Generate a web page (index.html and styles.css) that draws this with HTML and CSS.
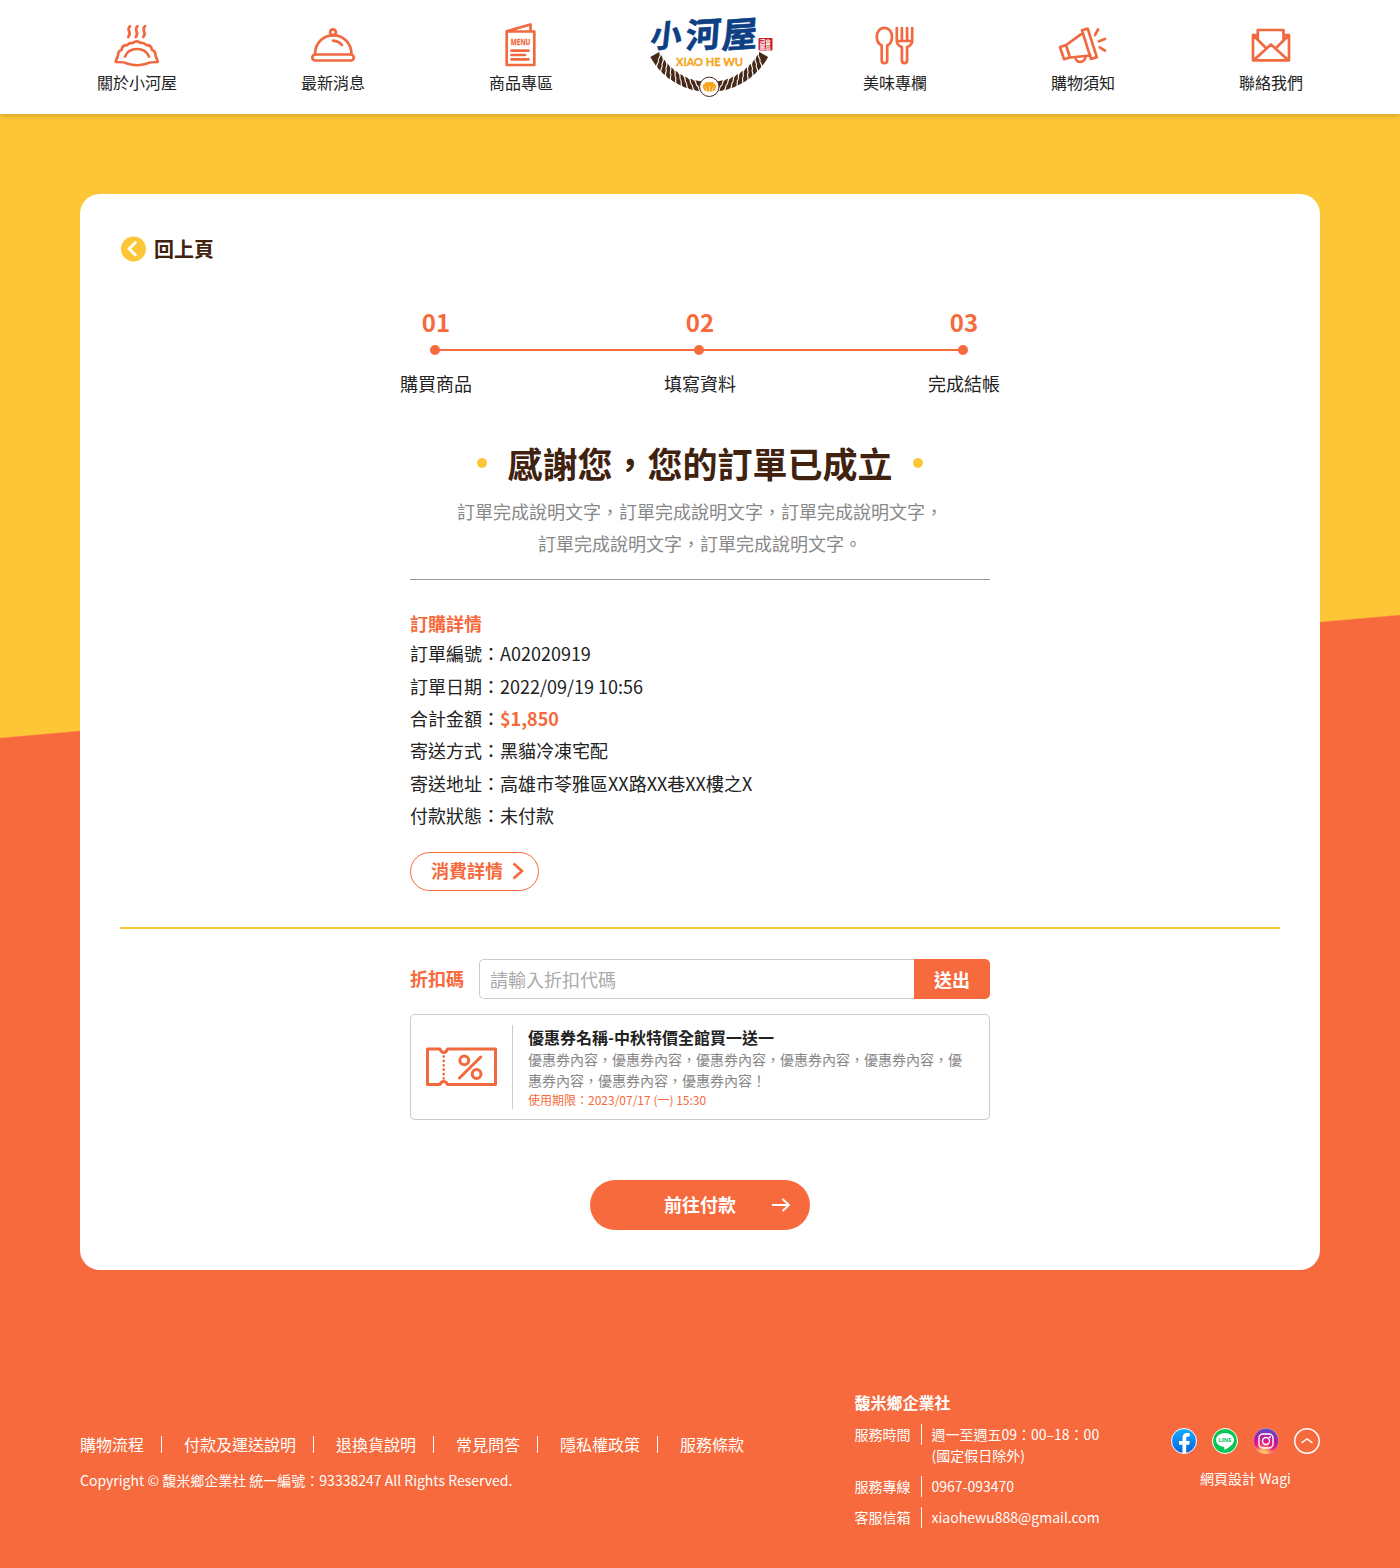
FILE: index.html
```html
<!DOCTYPE html>
<html lang="zh-Hant">
<head>
<meta charset="utf-8">
<title>小河屋</title>
<link rel="stylesheet" href="styles.css">
</head>
<body>
<header class="header">
  <nav class="nav">
    <a class="nav-item">
      <svg class="nav-icon" viewBox="0 0 50 50">
        <path d="M3.8 42C4 39.500 5.500 37.500 6 35.500C6 32.500 7.500 30.500 9.500 30C10 27 12 25 15 25.200C17 22.500 19.500 23 21 22.800C23.500 21 26 21 28.500 22.800C31 22.500 33 23.500 34.500 25.200C37.500 25 39.500 27 40 30C42 30.500 43.500 32.500 43.500 35.500C44 37.500 45.500 39.500 45.800 42C42 42 38 41.800 35 43.500C29 45.600 21 45.600 15 43.500C12 41.800 8 42 3.800 42ZM13 36.500C17 26.500 33 26.500 37 36.500"/>
        <path d="M18 6.200C13.500 9.800 20.500 12.700 16.300 17M25.500 6.200C21 9.800 28 12.700 23.800 17M33 6.200C28.500 9.800 35.500 12.700 31.300 17"/>
      </svg>
      <span>關於小河屋</span>
    </a>
    <a class="nav-item">
      <svg class="nav-icon" viewBox="0 0 50 50">
        <rect x="4.300" y="34.500" width="41.500" height="6" rx="3"/>
        <path d="M7 34.500C7 9 43.500 9 43.500 34.500M25 20.700C29 21 32 22.500 34 25"/>
        <circle cx="25" cy="12.300" r="2.900"/>
      </svg>
      <span>最新消息</span>
    </a>
    <a class="nav-item">
      <svg class="nav-icon" viewBox="0 0 50 50">
        <path d="M10.700 11.500H38.300V45H10.700ZM10.700 11.200L34.500 4.500V11M15.500 30.700H32.500M15.500 35H29M15.500 39.300H32.500"/>
        <text class="menu-word" x="24.600" y="24.500" textLength="19.500" lengthAdjust="spacingAndGlyphs">MENU</text>
      </svg>
      <span>商品專區</span>
    </a>
    <a class="logo">
      <svg viewBox="0 0 145 100" width="145" height="100">
        <defs>
          <path id="groove" d="M-5.500-5.500C-1.500-5.500-2 0 0 0S1.500 5.500 5.500 5.500"/>
          <g id="rope">
            <path d="M0 62A62 62 0 0 1-54.500 29.500" fill="none" stroke="#47291a" stroke-width="10"/>
            <g fill="none" stroke="#fff" stroke-width="1.100">
              <use href="#groove" transform="rotate(11) translate(0 62)"/>
              <use href="#groove" transform="rotate(16.500) translate(0 62)"/>
              <use href="#groove" transform="rotate(22) translate(0 62)"/>
              <use href="#groove" transform="rotate(27.500) translate(0 62)"/>
              <use href="#groove" transform="rotate(33) translate(0 62)"/>
              <use href="#groove" transform="rotate(38.500) translate(0 62)"/>
              <use href="#groove" transform="rotate(44) translate(0 62)"/>
              <use href="#groove" transform="rotate(49.500) translate(0 62)"/>
              <use href="#groove" transform="rotate(55) translate(0 62)"/>
            </g>
          </g>
        </defs>
        <use href="#rope" transform="translate(69.200 17)"/>
        <use href="#rope" transform="translate(69.200 17) scale(-1 1)"/>
        <g class="brush">
          <text transform="translate(9.500 40) skewX(-10) rotate(-4)" font-size="31">小</text>
          <text transform="translate(45 40.500) skewX(-8) rotate(-4)" font-size="35">河</text>
          <text transform="translate(81 40.500) skewX(-8) rotate(-4)" font-size="35.500">屋</text>
        </g>
        <rect x="118.500" y="30" width="14" height="12.500" rx="1" fill="#c9202c"/>
        <text class="seal" x="119.700" y="35.700">河食</text>
        <text class="seal" x="119.700" y="41.200">屋品</text>
        <text class="latin" x="69.500" y="57.500" textLength="67" lengthAdjust="spacingAndGlyphs">XIAO HE WU</text>
        <circle cx="69.300" cy="78.800" r="9.700" fill="#fff" stroke="#47291a" stroke-width="1"/>
        <path d="M63.500 80.500a3 3 0 0 1 1-4.800a2.800 2.800 0 0 1 3.500-1.500a3 3 0 0 1 3 0a2.800 2.800 0 0 1 3.500 1.500a3 3 0 0 1 1 4.800c-.5 2.500-2.500 3-6 3s-5.500-.5-6-3z" fill="#f6a41c"/>
        <path d="M66.500 83v-2.500l-2-1.500M69.500 83.500V78M72.500 83v-2.500l2-1.500" fill="none" stroke="#fff" stroke-width=".5"/>
      </svg>
    </a>
    <a class="nav-item">
      <svg class="nav-icon" viewBox="0 0 50 50">
        <path d="M11.700 25.500C8.500 24 6.800 20.500 6.800 17C6.800 11.500 10 7.800 14.400 7.800S22 11.500 22 17C22 20.500 20.500 24 17.200 25.500V40.500A2.750 2.750 0 0 1 11.700 40.500Z"/>
        <path d="M26.800 8V21C26.800 24 29 26 31.900 27V40.500A2.600 2.600 0 0 0 37.100 40.500V27C40 26 42.200 24 42.200 21V8M31.900 8V20.500M37.100 8V20.500M26.800 21H42.200"/>
      </svg>
      <span>美味專欄</span>
    </a>
    <a class="nav-item">
      <svg class="nav-icon" viewBox="0 0 50 50">
        <path d="M24 10.300L29.700 8.600L38.800 37.200L33 38.900ZM24.800 12.800L8.300 25M32.500 35.500L12 37.500M2 27L8 25L12 37.500L6 39.200ZM17.500 37.500C18 43.500 27 43.500 27.500 36.500M37 15L40 9.500M41 21.300L47 18.900M41.700 27.300L47 30.600"/>
      </svg>
      <span>購物須知</span>
    </a>
    <a class="nav-item">
      <svg class="nav-icon" viewBox="0 0 50 50">
        <path d="M11.800 15H7V40.300H43V15H37.500M11.800 19.500V10H37.500V19.500M7 15L20.500 28.500M43 15L29.500 28.500M8 40L25 24.500L42 40"/>
      </svg>
      <span>聯絡我們</span>
    </a>
  </nav>
</header>

<main class="card">
  <a class="back">
    <svg width="26" height="26" viewBox="0 0 26 26"><circle cx="12.500" cy="13" r="12.500" fill="#fdc636"/><path d="M15.200 5.800L8.200 12.800L15.200 19.800" fill="none" stroke="#fff" stroke-width="2.800"/></svg>
    <span>回上頁</span>
  </a>

  <ol class="steps">
    <li class="step"><b class="step-no">01</b><i class="step-dot"></i><span>購買商品</span></li>
    <li class="step"><b class="step-no">02</b><i class="step-dot"></i><span>填寫資料</span></li>
    <li class="step"><b class="step-no">03</b><i class="step-dot"></i><span>完成結帳</span></li>
  </ol>

  <section class="order">
    <h1 class="title">感謝您，您的訂單已成立</h1>
    <p class="intro">訂單完成說明文字，訂單完成說明文字，訂單完成說明文字，<br>訂單完成說明文字，訂單完成說明文字。</p>
    <h2 class="subtitle">訂購詳情</h2>
    <ul class="details">
      <li>訂單編號：A02020919</li>
      <li>訂單日期：2022/09/19 10:56</li>
      <li>合計金額：<b class="price">$1,850</b></li>
      <li>寄送方式：黑貓冷凍宅配</li>
      <li>寄送地址：高雄市苓雅區XX路XX巷XX樓之X</li>
      <li>付款狀態：未付款</li>
    </ul>
    <a class="detail-btn">消費詳情
      <svg width="12" height="18" viewBox="0 0 12 18"><path d="M1.500 1.500L10 9L1.500 16.500" fill="none" stroke="currentColor" stroke-width="2.800"/></svg>
    </a>
  </section>

  <section class="discount">
    <form class="code">
      <label class="code-label">折扣碼</label>
      <input class="code-input" type="text" placeholder="請輸入折扣代碼">
      <button class="code-btn" type="button">送出</button>
    </form>
    <article class="coupon">
      <div class="coupon-icon">
        <svg width="71" height="40" viewBox="0 0 71 40" fill="none" stroke="#f0693f" stroke-width="3" stroke-linejoin="round">
          <path d="M1.500 2H14C15.500 6.500 20 6.500 21.500 2H69.500V37.500H21.500C20 33.500 15.500 33.500 14 37.500H1.500Z"/>
          <path d="M17.700 9.500V32" stroke-dasharray="0 4.400" stroke-width="2.700" stroke-linecap="round"/>
          <path d="M54.800 10L33.500 31" stroke-linecap="round"/>
          <circle cx="38.300" cy="13.300" r="4.400"/><circle cx="50.600" cy="27" r="4.400"/>
        </svg>
      </div>
      <div class="coupon-text">
        <h3 class="coupon-name">優惠券名稱-中秋特價全館買一送一</h3>
        <p class="coupon-desc">優惠券內容，優惠券內容，優惠券內容，優惠券內容，優惠券內容，優惠券內容，優惠券內容，優惠券內容！</p>
        <p class="coupon-date">使用期限：2023/07/17 (一) 15:30</p>
      </div>
    </article>
  </section>

  <a class="pay">前往付款
    <svg width="20" height="14" viewBox="0 0 20 14"><path d="M1 7H17.500M11.500 1L18 7L11.500 13" fill="none" stroke="#fff" stroke-width="1.800"/></svg>
  </a>
</main>

<footer class="footer">
  <div class="foot-left">
    <ul class="links">
      <li>購物流程</li><li>付款及運送說明</li><li>退換貨說明</li><li>常見問答</li><li>隱私權政策</li><li>服務條款</li>
    </ul>
    <p class="copyright">Copyright © 馥米鄉企業社 統一編號：93338247 All Rights Reserved.</p>
  </div>
  <div class="company">
    <h4 class="company-name">馥米鄉企業社</h4>
    <dl class="contact">
      <dt>服務時間</dt><dd>週一至週五09：00–18：00<br>(國定假日除外)</dd>
      <dt>服務專線</dt><dd>0967-093470</dd>
      <dt>客服信箱</dt><dd>xiaohewu888@gmail.com</dd>
    </dl>
  </div>
  <div class="social">
    <div class="social-row">
      <svg viewBox="0 0 26 26"><defs><linearGradient id="fb" x1="0" y1="0" x2="0" y2="1"><stop offset="0" stop-color="#18acfe"/><stop offset="1" stop-color="#0163e0"/></linearGradient></defs><circle cx="13" cy="13" r="12.500" fill="url(#fb)" stroke="#fff"/><path d="M11.500 25.500V16.800H8V13H11.500V10C11.500 6.500 13.500 5 16 5C17.200 5 18 5.100 18.700 5.300V8.500H17C15.600 8.500 15.200 9.200 15.200 10.300V13H18.700L18.200 16.800H15.200V25.500Z" fill="#fff"/></svg>
      <svg viewBox="0 0 26 26"><circle cx="13" cy="13" r="12.500" fill="#06c755" stroke="#fff"/><path d="M13 5C8 5 4 8.200 4 12C4 15.500 7.200 18.200 11.500 18.800C12.700 19 12.400 19.700 12.200 21.200C12.200 21.800 12.500 21.900 13.100 21.600C15.700 20.200 22 16.500 22 12C22 8.200 18 5 13 5Z" fill="#fff"/><text class="line-word" x="13" y="14.200" textLength="13" lengthAdjust="spacingAndGlyphs">LINE</text></svg>
      <svg viewBox="0 0 26 26"><defs><radialGradient id="ig" cx=".4" cy="1.050" r="1.050"><stop offset="0" stop-color="#ffdd66"/><stop offset=".18" stop-color="#fdb45c"/><stop offset=".45" stop-color="#e8207c"/><stop offset=".7" stop-color="#b41b9b"/><stop offset="1" stop-color="#4c50d2"/></radialGradient></defs><circle cx="13" cy="13" r="12.700" fill="url(#ig)" stroke="#fbb" stroke-width=".5"/><g fill="none" stroke="#fff" stroke-width="1.400"><rect x="6" y="6" width="14" height="14" rx="4"/><circle cx="13" cy="13" r="3.500"/></g><circle cx="17" cy="9" r="1" fill="#fff"/></svg>
      <svg viewBox="0 0 26 26" fill="none" stroke="#fff" stroke-width="1.500"><circle cx="13" cy="13" r="12.200"/><path d="M7.500 14.800L13 11L18.500 14.800"/></svg>
    </div>
    <p class="credit">網頁設計 Wagi</p>
  </div>
</footer>
</body>
</html>
```
FILE: styles.css
```css
* { box-sizing: border-box; margin: 0; padding: 0; }
ul, ol { list-style: none; }
body {
  width: 1400px;
  height: 1568px;
  font-family: "Noto Sans CJK TC", "Noto Sans", sans-serif;
  font-size: 18px;
  line-height: 1.5;
  color: #222;
  background:
    linear-gradient(#f66a3d, #f66a3d) 0 738px / 100% 830px no-repeat,
    linear-gradient(to bottom right, #fdc636 49.700%, #f66a3d 50.300%) 0 615px / 100% 123px no-repeat,
    #fdc636;
}

/* header */
.header { height: 114px; padding: 20px 97px; background: #fff; box-shadow: 0 0 6px rgba(0, 0, 0, .3); }
.nav { display: flex; gap: 124px; }
.nav-item { display: flex; flex-direction: column; align-items: center; font-size: 16px; line-height: 24px; white-space: nowrap; }
.nav-icon { width: 50px; height: 50px; fill: none; stroke: #f0693f; stroke-width: 2.700; stroke-linecap: round; stroke-linejoin: round; }
.menu-word { font: 700 9.500px "Noto Sans", sans-serif; text-anchor: middle; fill: #f0693f; stroke: #f0693f; stroke-width: .3; }
.logo { flex: 1; display: flex; justify-content: center; min-width: 0; height: 74px; margin: -12px -41px 0 -33px; }
.logo svg { flex: none; overflow: visible; }
.brush { font-family: "Noto Sans CJK TC", sans-serif; font-weight: 700; fill: #0c3f83; stroke: #0c3f83; stroke-width: .6; stroke-linejoin: round; }
.seal { font: 700 5.500px "Noto Sans CJK TC", sans-serif; fill: #fff; }
.latin { font: 700 11px Lato, sans-serif; text-anchor: middle; fill: #f6a41c; stroke: #f6a41c; stroke-width: .3; }

/* card */
.card { width: 1240px; height: 1076px; margin: 80px auto 0; padding: 40px; background: #fff; border-radius: 20px; }
.back { display: flex; align-items: center; gap: 7px; height: 30px; padding-left: 1px; font-size: 20px; font-weight: 700; color: #40220f; }
.steps { display: flex; justify-content: space-between; width: 600px; margin: 40px auto 0; background: linear-gradient(#f66a3d, #f66a3d) 35px 45px / 528px 2px no-repeat; }
.step { display: flex; flex-direction: column; align-items: center; width: 72px; line-height: 27px; }
.step-no { font-size: 24px; line-height: 36px; color: #f66a3d; }
.step-dot { width: 10px; height: 10px; margin: 5px 2px 15px 0; border-radius: 50%; background: #f66a3d; }

.order { width: 580px; margin: 40px auto 0; }
.title { display: flex; align-items: center; justify-content: center; gap: 20px; font-size: 35px; line-height: 52.500px; color: #40220f; }
.title::before, .title::after { content: ""; width: 10px; height: 10px; border-radius: 50%; background: #fdc636; }
.intro { padding: 5.500px 0 19.300px; line-height: 32.400px; text-align: center; color: #888; border-bottom: 1px solid #999; }
.subtitle { margin-top: 30px; font-size: 18px; color: #f66a3d; }
.details { line-height: 32.400px; }
.price { color: #f66a3d; }
.detail-btn { display: flex; align-items: center; justify-content: space-between; width: 129px; height: 39px; margin-top: 20px; padding: 0 14px 1px 20px; border: 1px solid #f66a3d; border-radius: 20px; font-weight: 700; color: #f66a3d; }

.discount { margin-top: 36.200px; padding: 30px 290px 0; border-top: 2px solid #fdc636; }
.code { display: flex; align-items: center; height: 40px; }
.code-label { width: 69px; font-weight: 700; color: #f66a3d; }
.code-input { flex: 1; min-width: 0; height: 40px; padding: 0 10px; border: 1px solid #ccc; border-right: 0; border-radius: 5px 0 0 5px; font: inherit; background: #fff; }
.code-input::placeholder { color: #aaa; }
.code-btn { width: 76px; height: 40px; padding-top: 1px; border: 0; border-radius: 0 5px 5px 0; font: inherit; font-weight: 700; color: #fff; background: #f66a3d; }
.coupon { display: flex; margin-top: 15px; padding: 10px 15px; border: 1px solid #ccc; border-radius: 5px; }
.coupon-icon { display: flex; align-items: center; padding-right: 15px; border-right: 1px solid #ccc; }
.coupon-text { flex: 1; padding-left: 15px; }
.coupon-name { font-size: 16px; line-height: 24px; }
.coupon-desc { font-size: 14px; line-height: 21px; color: #888; }
.coupon-date { font-size: 12px; line-height: 18px; color: #f66a3d; }

.pay { display: flex; align-items: center; justify-content: flex-end; gap: 35px; width: 220px; height: 50px; margin: 60px auto 0; padding-right: 19px; border-radius: 25px; font-weight: 700; color: #fff; background: #f66a3d; }

/* footer */
.footer { display: flex; margin-top: 120px; padding: 0 80px; color: #fff; font-size: 14px; line-height: 21px; }
.foot-left { width: 774.500px; padding-top: 42px; }
.links { display: flex; font-size: 16px; line-height: 24px; }
.links li + li { display: flex; align-items: center; }
.links li + li::before { content: ""; width: 1px; height: 17px; margin: 0 22px 0 17px; background: #fff; }
.copyright { margin-top: 14px; }
.company { width: 316.500px; }
.company-name { font-size: 16px; line-height: 24px; }
.contact { display: grid; grid-template-columns: 67.500px auto; row-gap: 10px; align-items: start; margin-top: 10px; }
.contact dt { border-right: 1px solid #fff; }
.contact dd { padding-left: 9.500px; }
.social { width: 149px; padding-top: 38px; text-align: center; }
.social-row { display: flex; gap: 15px; }
.social-row svg { width: 26px; height: 26px; }
.line-word { font: 700 6px "Noto Sans", sans-serif; text-anchor: middle; fill: #06c755; }
.credit { margin-top: 14px; }
```
